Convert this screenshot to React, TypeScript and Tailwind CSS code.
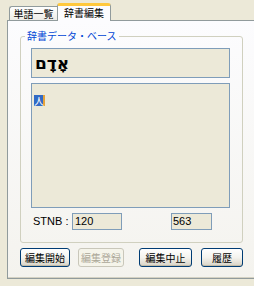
export default function App() {
  const jp = "font-['Noto_Sans_CJK_JP',sans-serif]";
  const btn =
    "h-[19px] rounded-[3px] border border-[#003c74] bg-gradient-to-b from-[#ffffff] via-[#f4f3ee] to-[#d8d3c6] text-[10px] leading-none text-black flex items-center justify-center shadow-[inset_0_-1px_0_#c2bba8]";
  return (
    <div className={`w-[254px] h-[286px] bg-[#ece9d8] overflow-hidden pt-[3px] pl-[7px] ${jp}`}>
      {/* tabs */}
      <div className="flex items-end h-[17px] pl-[2px]">
        <div className="w-[48px] h-[14px] border-t border-l border-[#919b9c] rounded-tl-[3px] bg-gradient-to-b from-[#ffffff] to-[#ecebe6] text-[10px] leading-[13px] text-center text-black">
          単語一覧
        </div>
        <div className="relative z-10 w-[54px] h-[18px] -mb-[1px] border-x border-[#919b9c] border-t-[3px] border-t-[#ffc83c] rounded-t-[3px] bg-[#fcfcfe] text-[10px] leading-[13px] text-center text-black">
          辞書編集
        </div>
      </div>
      {/* panel */}
      <div className="h-[259px] border border-r-0 border-[#919b9c] bg-gradient-to-b from-[#fcfcfe] to-[#f4f3ee] pl-[12px] pt-[15px] shadow-[inset_0_-1px_0_#d5d2c3]">
        <div className="relative w-[223px] h-[207px] border border-[#d0d0bf] rounded-[3px] pl-[10px] pt-[11px]">
          <div className="absolute left-[4px] top-[-7px] px-[2px] bg-[#fcfcfd] text-[10px] leading-[12px] text-[#0046d5]">
            辞書データ・ベース
          </div>
          <div className="w-[199px] h-[30px] border border-[#7f9db9] bg-[#ece9d8] pl-[3px] flex items-center">
            <span className="font-['DejaVu_Sans',sans-serif] font-bold text-[17px] leading-none text-black">
              אָדָם
            </span>
          </div>
          <div className="mt-[5px] w-[199px] h-[125px] border border-[#7f9db9] bg-[#ece9d8] pl-[2px] pt-[2px]">
            <span className="inline-block h-[11px] w-[11px] bg-[#316ac5] text-white text-[10px] leading-[11px] text-center border-r-[2px] border-r-[#e5a33b]">
              人
            </span>
          </div>
          <div className="mt-[5px] flex items-center h-[17px] font-['Liberation_Sans',sans-serif] text-[11px] text-black">
            <span className="ml-[2px] w-[39px]">STNB :</span>
            <div className="w-[50px] h-[17px] border border-[#7f9db9] bg-[#ece9d8] pl-[2px] leading-[15px]">120</div>
            <div className="ml-[49px] w-[41px] h-[17px] border border-[#7f9db9] bg-[#ece9d8] pl-[1px] leading-[15px]">563</div>
          </div>
        </div>
        <div className="mt-[5px] flex">
          <div className={`${btn} w-[50px]`}>編集開始</div>
          <div className="ml-[8px] w-[46px] h-[19px] rounded-[3px] border border-[#c9c7ba] bg-[#f5f4ea] text-[10px] leading-none text-[#aca899] flex items-center justify-center">
            編集登録
          </div>
          <div className={`${btn} ml-[15px] w-[53px]`}>編集中止</div>
          <div className={`${btn} ml-[9px] w-[42px]`}>履歴</div>
        </div>
      </div>
    </div>
  );
}
